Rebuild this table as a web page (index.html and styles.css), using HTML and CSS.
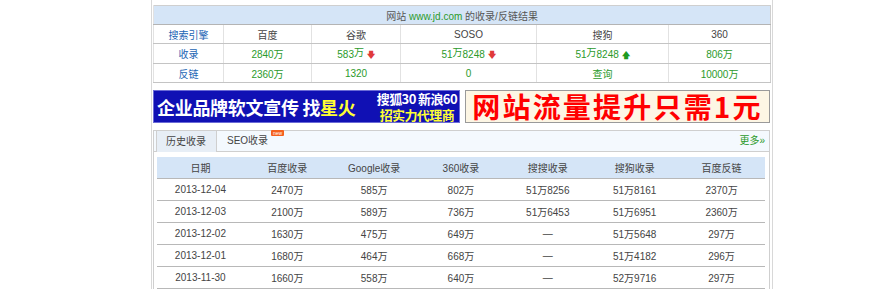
FILE: index.html
```html
<!DOCTYPE html>
<html lang="zh-CN">
<head>
    <meta charset="UTF-8">
    <title>网站收录查询</title>
    <link rel="stylesheet" href="styles.css">
</head>
<body>
    <div class="wrap">
        <!-- 收录 / 反链 汇总 -->
        <table class="summary">
            <colgroup>
                <col class="c1"><col class="c2"><col class="c3"><col class="c4"><col class="c5"><col class="c6">
            </colgroup>
            <tr>
                <th colspan="6" class="title">网站 <span class="site">www.jd.com</span> 的收录/反链结果</th>
            </tr>
            <tr>
                <td class="label">搜索引擎</td>
                <td>百度</td>
                <td>谷歌</td>
                <td>SOSO</td>
                <td>搜狗</td>
                <td>360</td>
            </tr>
            <tr class="num">
                <td class="label">收录</td>
                <td>2840万</td>
                <td>583<sup>万</sup> <span class="down">&#129095;</span></td>
                <td>51<sup>万</sup>8248 <span class="down">&#129095;</span></td>
                <td>51<sup>万</sup>8248 <span class="up">&#129093;</span></td>
                <td>806万</td>
            </tr>
            <tr class="num">
                <td class="label">反链</td>
                <td>2360万</td>
                <td>1320</td>
                <td>0</td>
                <td><a href="#">查询</a></td>
                <td>10000万</td>
            </tr>
        </table>

        <!-- 广告位 -->
        <div class="ads">
            <div class="ad-blue">
                <span class="big">企业品牌软文宣传 找<em>星火</em></span>
                <span class="small">
                    <span>搜狐30 新浪60</span>
                    <em>招实力代理商</em>
                </span>
            </div>
            <div class="ad-red">网站流量提升只需1元</div>
        </div>

        <!-- 历史收录 -->
        <div class="tabbox">
            <div class="tabs">
                <span class="tab active">历史收录</span>
                <span class="tab">SEO收录<i class="new">new</i></span>
                <a class="more" href="#">更多»</a>
            </div>
            <table class="history">
                <tr>
                    <th>日期</th><th>百度收录</th><th>Google收录</th><th>360收录</th><th>搜搜收录</th><th>搜狗收录</th><th>百度反链</th>
                </tr>
                <tr><td>2013-12-04</td><td>2470万</td><td>585万</td><td>802万</td><td>51万8256</td><td>51万8161</td><td>2370万</td></tr>
                <tr><td>2013-12-03</td><td>2100万</td><td>589万</td><td>736万</td><td>51万6453</td><td>51万6951</td><td>2360万</td></tr>
                <tr><td>2013-12-02</td><td>1630万</td><td>475万</td><td>649万</td><td>—</td><td>51万5648</td><td>297万</td></tr>
                <tr><td>2013-12-01</td><td>1680万</td><td>464万</td><td>668万</td><td>—</td><td>51万4182</td><td>296万</td></tr>
                <tr><td>2013-11-30</td><td>1660万</td><td>558万</td><td>640万</td><td>—</td><td>52万9716</td><td>297万</td></tr>
            </table>
        </div>
    </div>
</body>
</html>
```

FILE: styles.css
```css
body {
    margin: 0;
    background-color: #fff;
    font-family: "Liberation Sans", "Noto Sans CJK SC", sans-serif;
    font-size: 10px;
    color: #555;
}

a {
    text-decoration: none;
    color: #2b9a2b;
}

.wrap {
    margin-left: 151px;
    width: 617px;
    min-height: 100vh;
    padding: 5px 2px 0 1px;
    border-left: 1px solid #d8d8d8;
    border-right: 1px solid #d8d8d8;
    box-sizing: content-box;
}

/* 汇总表 */
.summary {
    width: 617px;
    border-collapse: collapse;
    border: 1px solid #cfcfcf;
    table-layout: fixed;
}

.summary .c1 { width: 70px; }
.summary .c2 { width: 88px; }
.summary .c3 { width: 89px; }
.summary .c4 { width: 136px; }
.summary .c5 { width: 132px; }
.summary .c6 { width: 102px; }

.summary th, .summary td {
    height: 18px;
    padding: 0;
    text-align: center;
    font-weight: normal;
    border-left: 1px solid #e2e2e2;
    border-bottom: 1px solid #c4c4c4;
    color: #444;
}

.summary .title {
    background-color: #d5e5f7;
    color: #555;
    border-bottom-color: #b4b4b4;
}

.summary .site {
    color: #2b9a2b;
}

.summary .label {
    color: #1a64b4;
}

.summary .num td {
    color: #2b9a2b;
}

.summary .num td.label {
    color: #1a64b4;
}

.summary sup {
    font-size: 10px;
    vertical-align: 2px;
}

.down, .up {
    font-size: 8px;
    font-family: "DejaVu Sans", sans-serif;
    font-weight: bold;
}

.down { color: #e03a3a; }
.up { color: #1f9a1f; }

/* 广告 */
.ads {
    display: flex;
    gap: 5px;
    margin-top: 7px;
    height: 33px;
}

.ad-blue {
    width: 307px;
    box-sizing: border-box;
    border: 1px solid #6b6bd6;
    background-color: #1010b4;
    display: flex;
    align-items: center;
    justify-content: space-between;
    padding: 0 2px 0 3px;
    color: #fff;
    font-family: "Noto Sans CJK SC", sans-serif;
    font-weight: bold;
}

.ad-blue em {
    font-style: normal;
    color: #ffff33;
}

.ad-blue .big {
    font-size: 18px;
    line-height: 22px;
    letter-spacing: -0.3px;
    white-space: nowrap;
}

.ad-blue .small {
    display: flex;
    flex-direction: column;
    align-items: center;
    font-size: 13px;
    line-height: 16px;
    letter-spacing: -0.6px;
    white-space: nowrap;
}

.ad-red {
    width: 305px;
    box-sizing: border-box;
    border: 1px solid #9a9a9a;
    background-color: #fdf6e4;
    color: #f00;
    font-family: "Noto Sans CJK SC", sans-serif;
    font-weight: bold;
    font-size: 28px;
    line-height: 31px;
    text-align: center;
    letter-spacing: 2.2px;
    white-space: nowrap;
}

/* 历史收录 */
.tabbox {
    margin-top: 7px;
    border: 1px solid #cfcfcf;
    box-sizing: border-box;
    width: 617px;
    padding-bottom: 2px;
}

.tabs {
    display: flex;
    align-items: flex-end;
    height: 20px;
    padding-left: 2px;
    background-color: #f4f9fe;
    border-bottom: 1px solid #cfcfcf;
}

.tab {
    position: relative;
    display: block;
    height: 20px;
    line-height: 20px;
    padding: 0 10px;
    color: #444;
    white-space: nowrap;
}

.tab.active {
    padding: 0 10px 0 9px;
    background-color: #e7eef6;
    border-left: 1px solid #cfcfcf;
    border-right: 1px solid #cfcfcf;
    height: 21px;
    margin-bottom: -1px;
    line-height: 21px;
}

.new {
    position: absolute;
    top: -1px;
    right: -6px;
    height: 6px;
    padding: 0 2px;
    background-color: #f5601c;
    border-radius: 1px;
    color: #fff;
    font-style: normal;
    font-size: 5px;
    line-height: 6px;
}

.more {
    margin-left: auto;
    margin-right: 4px;
    line-height: 20px;
}

.history {
    width: 608px;
    margin: 5px 0 0 3px;
    border-collapse: collapse;
    table-layout: fixed;
}

.history th, .history td {
    padding: 0;
    text-align: center;
    font-weight: normal;
    color: #444;
}

.history th {
    height: 21px;
    background-color: #d5e5f7;
    border-bottom: 1px solid #b8b8b8;
}

.history td {
    height: 21px;
    border-bottom: 1px solid #b8b8b8;
}
```
